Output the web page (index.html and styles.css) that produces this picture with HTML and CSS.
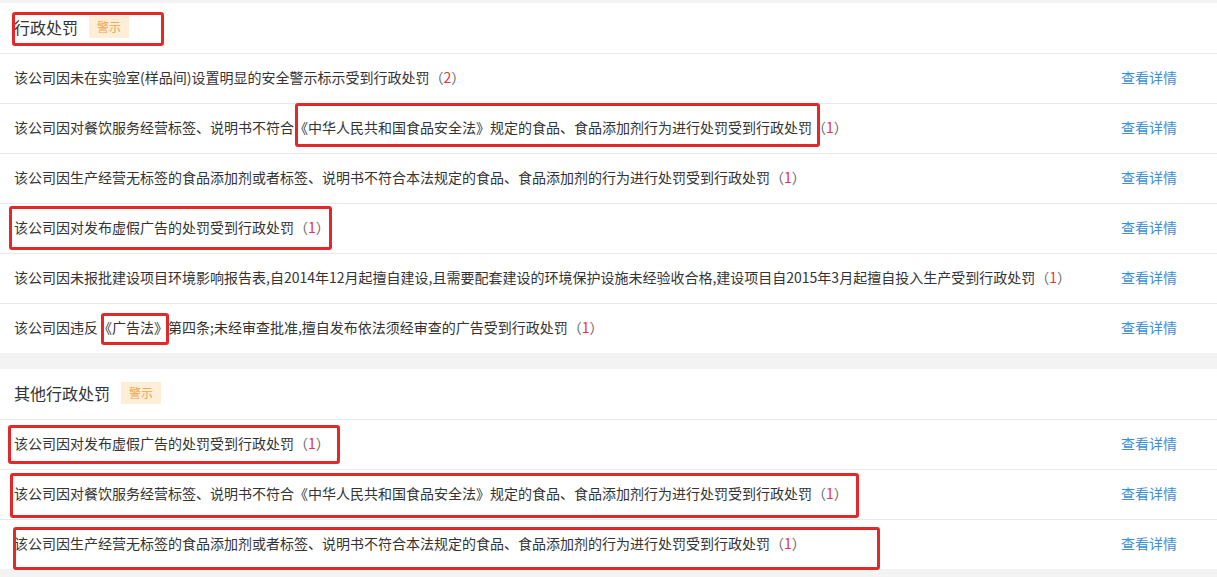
FILE: index.html
```html
<!DOCTYPE html>
<html lang="zh-CN">
<head>
    <meta charset="UTF-8">
    <title>行政处罚</title>
    <link rel="stylesheet" href="styles.css">
</head>
<body>
    <div class="page">
        <div class="section">
            <div class="section-head">
                <span class="section-title">行政处罚</span>
                <span class="tag">警示</span>
            </div>
            <div class="row">
                <span class="row-text">该公司因未在实验室(样品间)设置明显的安全警示标示受到行政处罚<span class="paren">（</span><span class="count">2</span><span class="paren">）</span></span>
                <a class="row-link" href="#">查看详情</a>
            </div>
            <div class="row">
                <span class="row-text">该公司因对餐饮服务经营标签、说明书不符合《中华人民共和国食品安全法》规定的食品、食品添加剂行为进行处罚受到行政处罚<span class="paren">（</span><span class="count">1</span><span class="paren">）</span></span>
                <a class="row-link" href="#">查看详情</a>
            </div>
            <div class="row">
                <span class="row-text">该公司因生产经营无标签的食品添加剂或者标签、说明书不符合本法规定的食品、食品添加剂的行为进行处罚受到行政处罚<span class="paren">（</span><span class="count">1</span><span class="paren">）</span></span>
                <a class="row-link" href="#">查看详情</a>
            </div>
            <div class="row">
                <span class="row-text">该公司因对发布虚假广告的处罚受到行政处罚<span class="paren">（</span><span class="count">1</span><span class="paren">）</span></span>
                <a class="row-link" href="#">查看详情</a>
            </div>
            <div class="row">
                <span class="row-text">该公司因未报批建设项目环境影响报告表,自2014年12月起擅自建设,且需要配套建设的环境保护设施未经验收合格,建设项目自2015年3月起擅自投入生产受到行政处罚<span class="paren">（</span><span class="count">1</span><span class="paren">）</span></span>
                <a class="row-link" href="#">查看详情</a>
            </div>
            <div class="row">
                <span class="row-text">该公司因违反《广告法》第四条;未经审查批准,擅自发布依法须经审查的广告受到行政处罚<span class="paren">（</span><span class="count">1</span><span class="paren">）</span></span>
                <a class="row-link" href="#">查看详情</a>
            </div>
        </div>

        <div class="section">
            <div class="section-head">
                <span class="section-title">其他行政处罚</span>
                <span class="tag">警示</span>
            </div>
            <div class="row">
                <span class="row-text">该公司因对发布虚假广告的处罚受到行政处罚<span class="paren">（</span><span class="count">1</span><span class="paren">）</span></span>
                <a class="row-link" href="#">查看详情</a>
            </div>
            <div class="row">
                <span class="row-text">该公司因对餐饮服务经营标签、说明书不符合《中华人民共和国食品安全法》规定的食品、食品添加剂行为进行处罚受到行政处罚<span class="paren">（</span><span class="count">1</span><span class="paren">）</span></span>
                <a class="row-link" href="#">查看详情</a>
            </div>
            <div class="row">
                <span class="row-text">该公司因生产经营无标签的食品添加剂或者标签、说明书不符合本法规定的食品、食品添加剂的行为进行处罚受到行政处罚<span class="paren">（</span><span class="count">1</span><span class="paren">）</span></span>
                <a class="row-link" href="#">查看详情</a>
            </div>
        </div>

        <!-- red annotation boxes drawn over the list -->
        <div class="mark" style="left:12px;top:12px;width:152px;height:34px"></div>
        <div class="mark" style="left:295px;top:103px;width:525px;height:44px"></div>
        <div class="mark" style="left:9px;top:206px;width:323px;height:44px"></div>
        <div class="mark" style="left:101px;top:313px;width:68px;height:32px"></div>
        <div class="mark" style="left:8px;top:425px;width:332px;height:39px"></div>
        <div class="mark" style="left:10px;top:473px;width:849px;height:45px"></div>
        <div class="mark" style="left:13px;top:527px;width:867px;height:43px"></div>
    </div>
</body>
</html>
```

FILE: styles.css
```css
body {
    margin: 0;
    background: #f3f3f3;
    font-family: "Noto Sans CJK SC", "Noto Sans", sans-serif;
    color: #333;
}

.page {
    position: relative;
    padding-top: 3px;
}

.section {
    background: #fff;
    margin-bottom: 16px;
}

.section-head {
    height: 50px;
    box-sizing: border-box;
    padding: 0 0 2px 14px;
    display: flex;
    align-items: center;
}

.section-title {
    font-size: 16px;
}

.tag {
    margin-left: 11px;
    width: 40px;
    height: 22px;
    line-height: 22px;
    text-align: center;
    font-size: 12px;
    color: #f2a54c;
    background: #fdeed8;
}

.row {
    height: 50px;
    box-sizing: border-box;
    border-top: 1px solid #e9e9e9;
    display: flex;
    align-items: center;
    padding: 0 40px 3px 14px;
    font-size: 14px;
}

.row-text {
    flex: 1;
    white-space: nowrap;
}

.paren {
    color: #666;
}

.count {
    color: #e8323c;
}

.row-link {
    color: #3b8ed8;
    text-decoration: none;
    font-size: 14px;
}

.mark {
    position: absolute;
    border: 3px solid #e4282a;
    border-radius: 3px;
    box-sizing: border-box;
}
```
